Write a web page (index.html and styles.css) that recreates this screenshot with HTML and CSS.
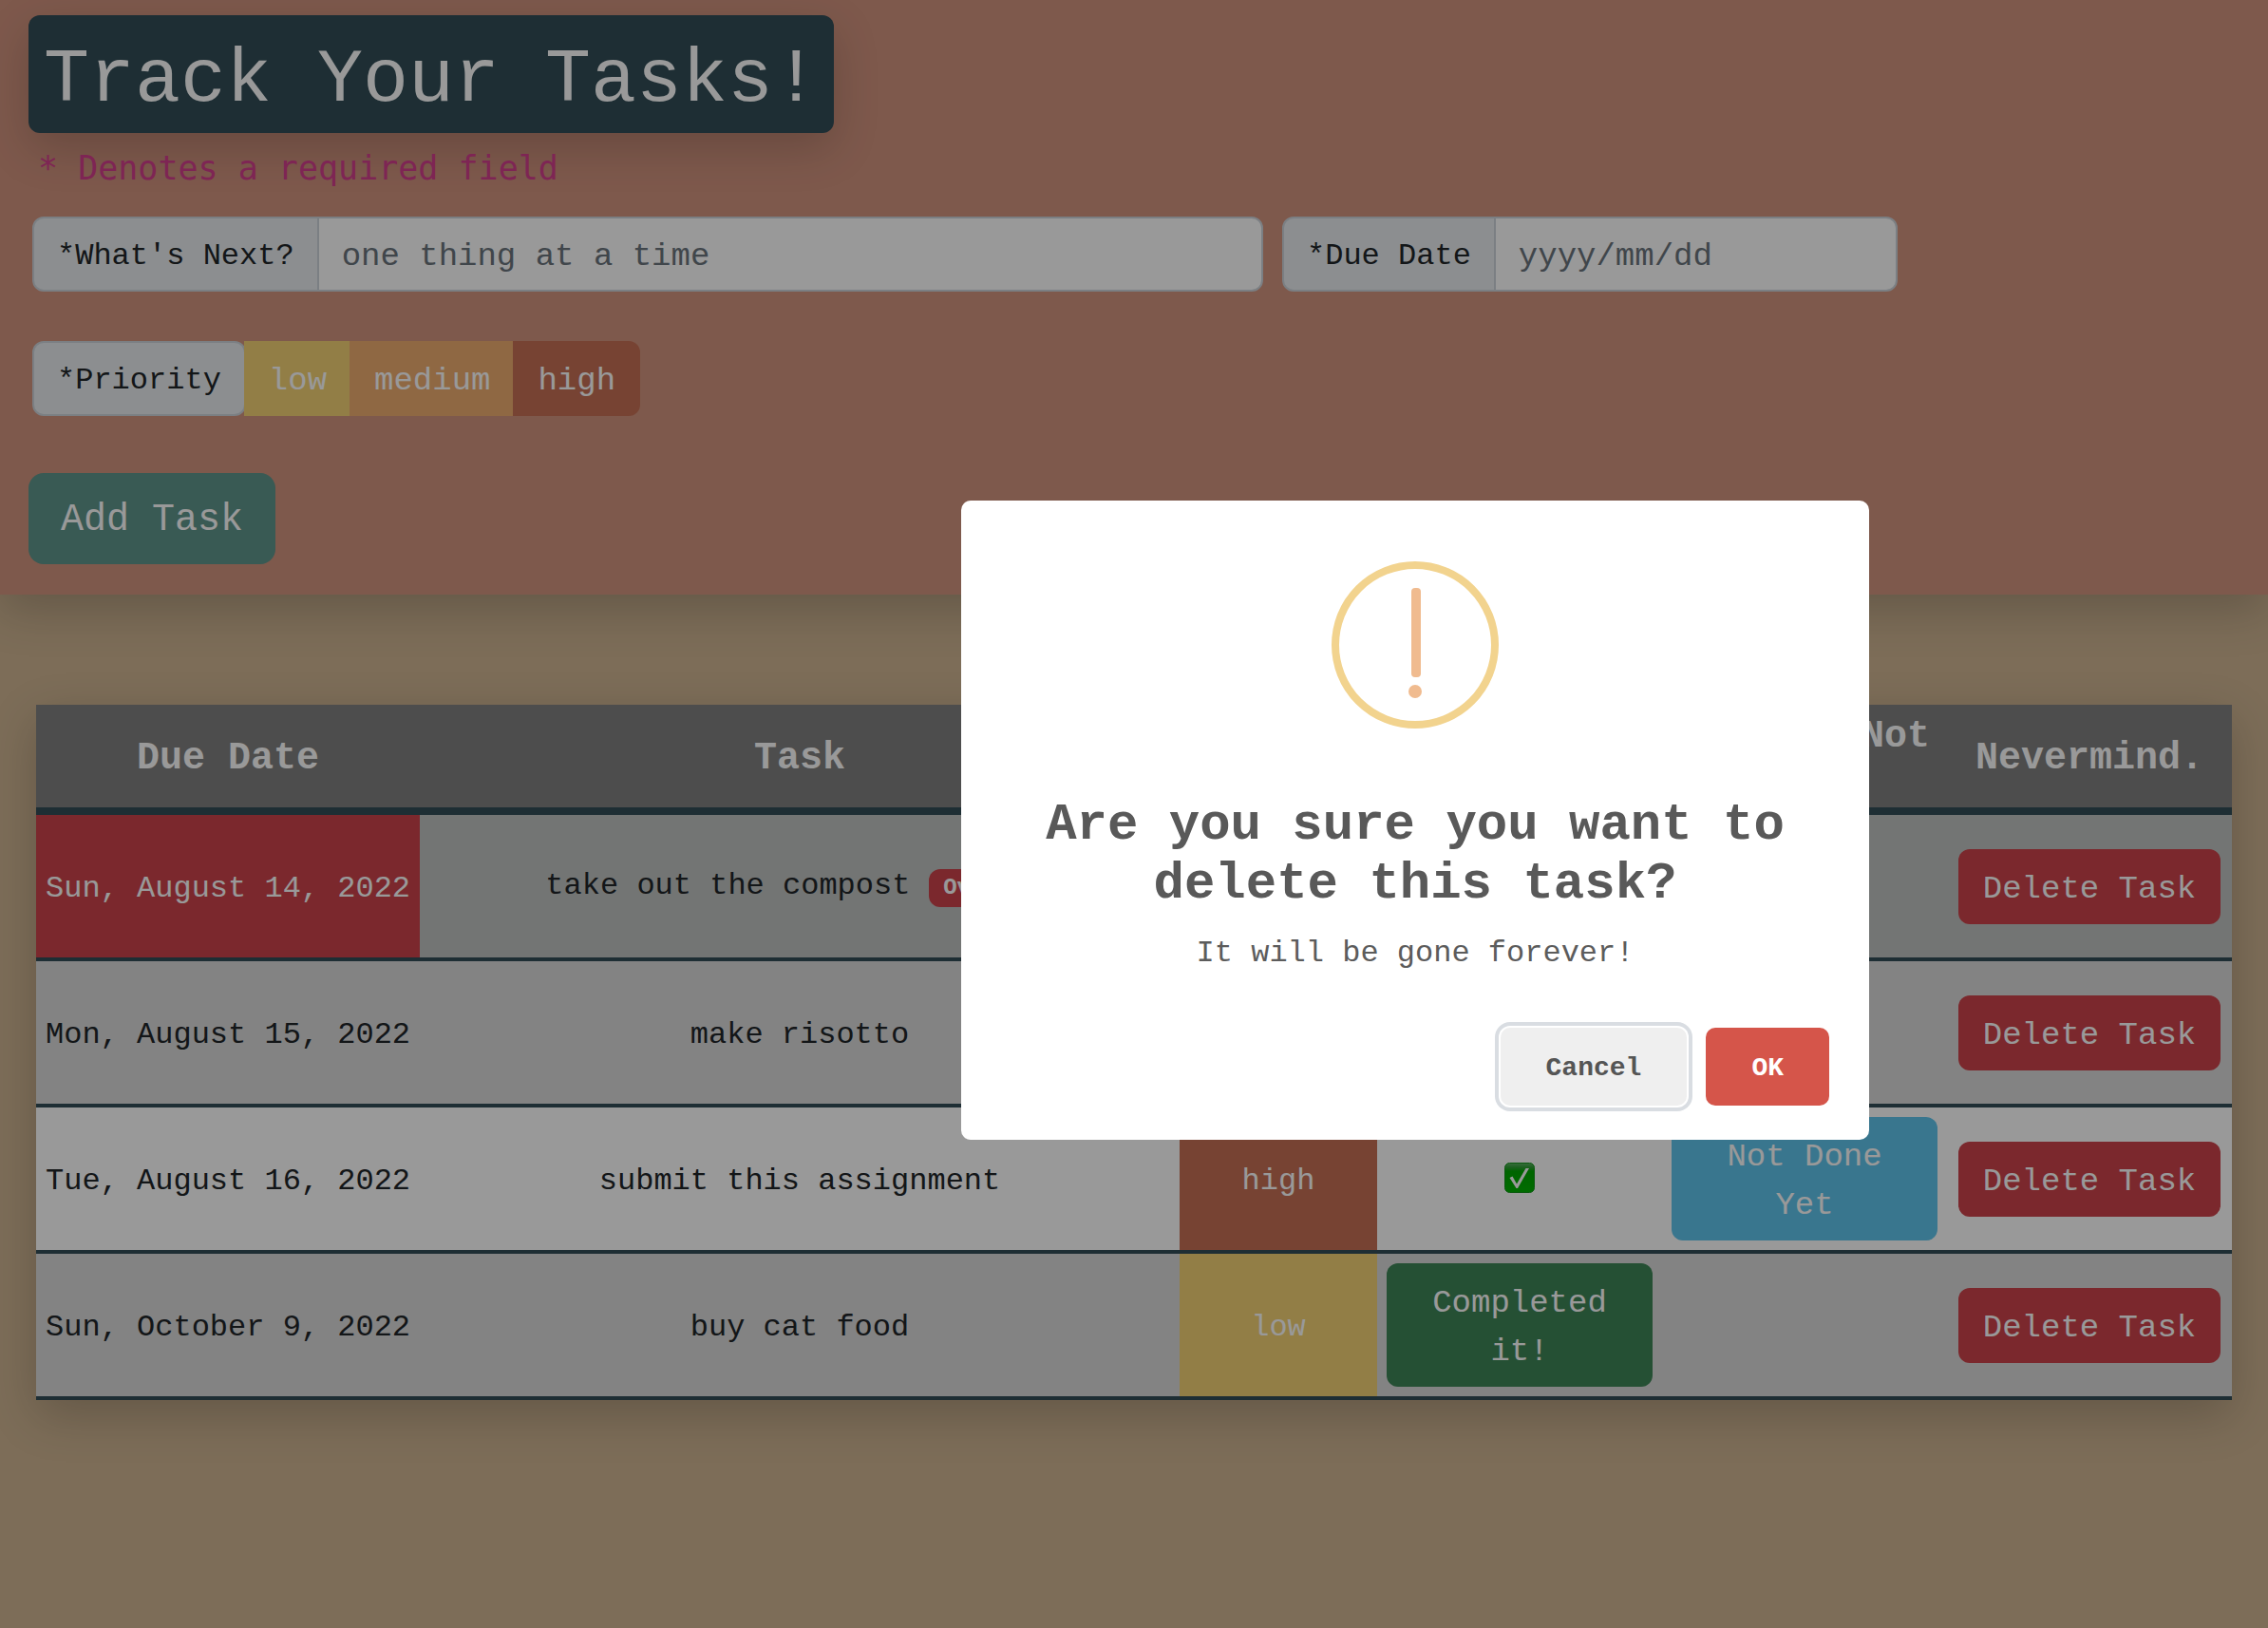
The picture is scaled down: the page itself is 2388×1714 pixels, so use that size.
FILE: index.html
```html
<!DOCTYPE html>
<html lang="en">
<head>
<meta charset="utf-8">
<title>Track Your Tasks!</title>
<link rel="stylesheet" href="styles.css">
</head>
<body>
<header class="planner">
  <h1 class="title">Track Your Tasks!</h1>
  <p class="required">* Denotes a required field</p>
  <form class="fields">
    <div class="group group-task">
      <label class="tag" for="task">*What's Next?</label>
      <input class="control" id="task" type="text" placeholder="one thing at a time">
    </div>
    <div class="group group-date">
      <label class="tag" for="due">*Due Date</label>
      <input class="control" id="due" type="text" placeholder="yyyy/mm/dd">
    </div>
  </form>
  <div class="priorities">
    <span class="tag tag-round">*Priority</span>
    <button class="btn btn-low">low</button>
    <button class="btn btn-medium">medium</button>
    <button class="btn btn-high">high</button>
  </div>
  <button class="add">Add Task</button>
</header>

<main class="board">
  <table class="tasks">
    <colgroup>
      <col class="col-date"><col class="col-task"><col class="col-priority"><col class="col-action"><col class="col-action"><col class="col-action">
    </colgroup>
    <thead>
      <tr><th>Due Date</th><th>Task</th><th>Priority</th><th>Completed?</th><th>Oops... Not Done</th><th>Nevermind.</th></tr>
    </thead>
    <tbody>
      <tr class="row-overdue">
        <td class="late">Sun, August 14, 2022</td>
        <td class="with-badge">take out the compost <span class="badge">Overdue</span></td>
        <td class="medium"></td>
        <td></td>
        <td></td>
        <td><button class="btn btn-delete">Delete Task</button></td>
      </tr>
      <tr class="row-shaded">
        <td>Mon, August 15, 2022</td>
        <td>make risotto</td>
        <td class="low"></td>
        <td></td>
        <td></td>
        <td><button class="btn btn-delete">Delete Task</button></td>
      </tr>
      <tr class="row-plain">
        <td>Tue, August 16, 2022</td>
        <td>submit this assignment</td>
        <td class="high">high</td>
        <td>
          <svg class="check" viewBox="0 0 32 32" role="img" aria-label="Completed">
            <defs>
              <linearGradient id="gloss" x1="0" y1="0" x2="0" y2="1">
                <stop offset="0" stop-color="#5fb565"/>
                <stop offset=".15" stop-color="#2f9f35"/>
                <stop offset=".28" stop-color="#00a800"/>
                <stop offset="1" stop-color="#00b400"/>
              </linearGradient>
            </defs>
            <rect x=".5" y=".5" width="31" height="31" rx="5" fill="url(#gloss)" stroke="#14961c"/>
            <path d="M5.5 16 L8.5 14.5 L13 22.5 L22.5 6 L26 6 L14 27 L12.5 27 Z" fill="#fff"/>
          </svg>
        </td>
        <td><button class="btn btn-undo">Not Done Yet</button></td>
        <td><button class="btn btn-delete">Delete Task</button></td>
      </tr>
      <tr class="row-shaded">
        <td>Sun, October 9, 2022</td>
        <td>buy cat food</td>
        <td class="low">low</td>
        <td><button class="btn btn-done">Completed it!</button></td>
        <td></td>
        <td><button class="btn btn-delete">Delete Task</button></td>
      </tr>
    </tbody>
  </table>
</main>

<div class="overlay"></div>
<section class="modal" role="dialog">
  <svg class="warning" viewBox="0 0 176 176" aria-hidden="true">
    <circle cx="88" cy="88" r="84" fill="none" stroke="#f2d38e" stroke-width="8"/>
    <rect x="84" y="28" width="10" height="94" rx="4" fill="#f0bb8f"/>
    <circle cx="88" cy="137" r="7" fill="#f0bb8f"/>
  </svg>
  <h2 class="modal-title">Are you sure you want to delete this task?</h2>
  <p class="modal-text">It will be gone forever!</p>
  <div class="modal-actions">
    <button class="choice choice-cancel">Cancel</button>
    <button class="choice choice-ok">OK</button>
  </div>
</section>
</body>
</html>
```

FILE: styles.css
```css
* { box-sizing: border-box; }

body {
  margin: 0;
  min-height: 1714px;
  overflow: hidden;
  background: #d0b693;
  color: #212529;
  font-family: "Courier New", "Liberation Mono", monospace;
  font-size: 32px;
  line-height: 1.5;
}

button, input { font-family: inherit; }

.planner {
  display: flex;
  flex-direction: column;
  align-items: flex-start;
  height: 626px;
  padding: 16px 30px 0;
  background: #d2947f;
  box-shadow: 0 16px 48px rgba(0, 0, 0, .2);
}

.title {
  margin: 0;
  height: 124px;
  padding: 21px 16px 7px;
  border-radius: 12px;
  background: #324d57;
  box-shadow: 0 16px 48px rgba(0, 0, 0, .175);
  color: #fff;
  font-size: 80px;
  font-weight: 500;
  line-height: 96px;
  white-space: pre;
}

.required {
  margin: 12px 0 0 10px;
  height: 52px;
  color: #d23e8c;
  font-family: "DejaVu Sans Mono", monospace;
  font-size: 35px;
  line-height: 50px;
}

.fields {
  display: flex;
  gap: 20px;
  margin: 24px 0 0 4px;
}

.group { display: flex; height: 79px; }
.group-task { width: 1296px; }
.group-date { width: 648px; }

.tag {
  flex: none;
  height: 79px;
  padding: 14px 24px 8px;
  border: 2px solid #ced4da;
  border-radius: 12px 0 0 12px;
  background: #e9edf0;
  line-height: 51px;
}

.tag-round { border-radius: 12px; }

.control {
  flex: 1;
  min-width: 0;
  margin-left: -2px;
  padding: 15px 24px 9px;
  border: 2px solid #ced4da;
  border-radius: 0 12px 12px 0;
  background: #fff;
  font-size: 34px;
  line-height: 51px;
}

.control::placeholder { color: #6c757d; opacity: 1; }

.btn {
  padding: 15px 24px 9px;
  border: 2px solid transparent;
  border-radius: 12px;
  color: #fff;
  font-size: 34px;
  line-height: 51px;
}

.priorities { display: flex; margin: 52px 0 0 4px; }
.priorities .btn { margin-left: -2px; border-radius: 0; }
.priorities .btn:last-child { border-radius: 0 12px 12px 0; }
.priorities .btn-low { background: #f3d275; border-color: #f3d275; }
.priorities .btn-medium { background: #eead71; border-color: #eead71; }
.priorities .btn-high { background: #c67155; border-color: #c67155; }

.add {
  height: 96px;
  margin-top: 60px;
  padding: 20px 34px 16px;
  border: 0;
  border-radius: 16px;
  background: #5f968c;
  color: #fff;
  font-size: 40px;
  line-height: 60px;
}

.board { padding: 116px 38px 0; }

.tasks {
  width: 2312px;
  table-layout: fixed;
  border-collapse: separate;
  border-spacing: 0;
  box-shadow: 0 16px 48px rgba(0, 0, 0, .2);
  text-align: center;
}

.col-date { width: 404px; }
.col-task { width: 800px; }
.col-priority { width: 208px; }
.col-action { width: 300px; }

.tasks th {
  height: 116px;
  padding: 11px 10px 5px;
  border-bottom: 8px solid #324d57;
  background: #808080;
  color: #fff;
  font-size: 40px;
  line-height: 46px;
}

.tasks td {
  height: 154px;
  padding: 13px 10px 7px;
  border-bottom: 4px solid #324d57;
  line-height: 48px;
  white-space: nowrap;
}

.tasks td:has(.btn), .tasks .with-badge { padding: 10px; }

.row-overdue td { background: #c0c3c1; }
.row-shaded td { background: #dadada; }
.row-plain td { background: #fff; }

.tasks .late { background: #cd444b; color: #fff; }
.tasks .low { background: #f3d275; color: #fff; }
.tasks .medium { background: #eead71; color: #fff; }
.tasks .high { background: #c67155; color: #fff; }

.badge {
  display: inline-block;
  padding: 8.4px 15.6px;
  border-radius: 12px;
  background: #cd444b;
  color: #fff;
  font-size: 24px;
  font-weight: 700;
  line-height: 24px;
}

.btn-done, .btn-undo {
  display: block;
  width: 280px;
  height: 130px;
  white-space: normal;
}

.btn-done { background: #3e8557; }
.btn-undo { background: #5fc5ed; }
.btn-delete { display: block; margin: 0 auto; background: #cd444b; }

.check {
  display: block;
  width: 32px;
  height: 32px;
  margin: -8px auto 0;
}

.overlay {
  position: fixed;
  inset: 0;
  background: rgba(0, 0, 0, .4);
}

.modal {
  position: fixed;
  top: 527px;
  left: 1012px;
  display: flex;
  flex-direction: column;
  align-items: center;
  width: 956px;
  height: 672.5px;
  padding-top: 64px;
  border-radius: 10px;
  background: #fff;
}

.warning { width: 176px; height: 176px; }

.modal-title {
  width: 800px;
  margin: 71px 0 0;
  color: #595959;
  font-size: 54px;
  font-weight: 700;
  line-height: 61.5px;
  text-align: center;
}

.modal-text {
  margin: 25px 0 0;
  color: #5c5c5c;
  line-height: 36px;
}

.modal-actions {
  display: flex;
  align-self: flex-end;
  gap: 20px;
  margin: 60px 42px 0 0;
}

.choice {
  height: 82px;
  padding: 22px 48px 18px;
  border: 0;
  border-radius: 10px;
  font-size: 28px;
  font-weight: 700;
  line-height: 42px;
}

.choice-cancel {
  background: #efefef;
  box-shadow: 0 0 0 2px #fff, 0 0 0 6px #d9dde2;
  color: #555;
}

.choice-ok { background: #d5554a; color: #fff; }
```
